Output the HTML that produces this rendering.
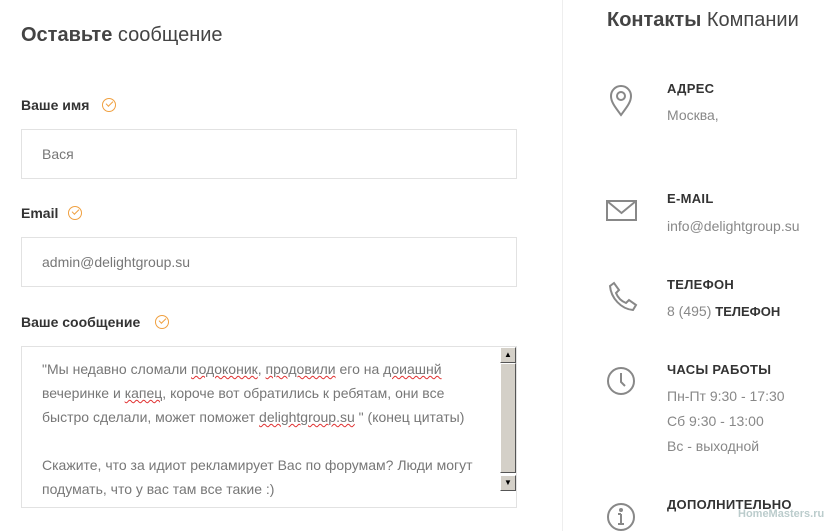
<!DOCTYPE html>
<html><head><meta charset="utf-8"><style>
*{margin:0;padding:0;box-sizing:border-box}
body{width:831px;height:531px;overflow:hidden;background:#fff;font-family:"Liberation Sans","DejaVu Sans",sans-serif;position:relative;color:#444}
.a{position:absolute;white-space:nowrap}
.h{font-size:20px;color:#444}
.h b{font-weight:bold}
.lbl{font-size:14px;font-weight:bold;color:#333}
.chk{position:absolute;width:14px;height:14px;border:1px solid #f0a040;border-radius:50%}
.chk:after{content:"";position:absolute;left:3px;top:2px;width:6px;height:3px;border-left:1.2px solid #f0a040;border-bottom:1.2px solid #f0a040;transform:rotate(-45deg)}
.inp{position:absolute;left:21px;width:496px;height:50px;border:1px solid #e2e2e2;font-size:14px;color:#777;padding:16px 0 0 20px}
.ta{position:absolute;left:21px;top:346px;width:496px;height:162px;border:1px solid #e2e2e2;font-size:14px;color:#777;line-height:24px;padding:10px 0 0 20px}
.sq{text-decoration:underline wavy #e03030;text-decoration-thickness:1px}
.sb{position:absolute;background:#d4d0c8;border:1px solid;border-color:#fff #555 #555 #fff}
.hd{font-size:13px;font-weight:bold;color:#333;letter-spacing:.3px}
.tx{font-size:14px;color:#888}
</style></head><body>
<div class="a h" style="left:21px;top:24px"><b>Оставьте</b> сообщение</div>
<div class="a lbl" style="left:21px;top:97px">Ваше имя</div><div class="chk" style="left:102px;top:98px"></div>
<div class="inp" style="top:129px">Вася</div>
<div class="a lbl" style="left:21px;top:205px">Email</div><div class="chk" style="left:68px;top:206px"></div>
<div class="inp" style="top:237px">admin@delightgroup.su</div>
<div class="a lbl" style="left:21px;top:314px">Ваше сообщение</div><div class="chk" style="left:155px;top:315px"></div>
<div class="ta">"Мы недавно сломали <span class="sq">подоконик</span>, <span class="sq">продовили</span> его на <span class="sq">доиашнй</span><br>вечеринке и <span class="sq">капец</span>, короче вот обратились к ребятам, они все<br>быстро сделали, может поможет <span class="sq">delightgroup.su</span> " (конец цитаты)<br><br>Скажите, что за идиот рекламирует Вас по форумам? Люди могут<br>подумать, что у вас там все такие :)</div>
<div class="sb" style="left:500px;top:347px;width:16px;height:16px;font-size:8px;text-align:center;line-height:14px;color:#000">▲</div>
<div class="sb" style="left:500px;top:363px;width:16px;height:110px"></div>
<div class="sb" style="left:500px;top:475px;width:16px;height:16px;font-size:8px;text-align:center;line-height:14px;color:#000">▼</div>
<div class="a" style="left:562px;top:0;width:1px;height:531px;background:#eee"></div>
<div class="a h" style="left:607px;top:9px"><b>Контакты</b> Компании</div>
<svg class="a" style="left:606px;top:84px" width="30" height="34" viewBox="0 0 30 34" fill="none" stroke="#888" stroke-width="2"><path d="M15 31 C9 23 5 18 5 12 A10 10 0 0 1 25 12 C25 18 21 23 15 31Z"/><circle cx="15" cy="12" r="4"/></svg>
<div class="a hd" style="left:667px;top:81px">АДРЕС</div>
<div class="a tx" style="left:667px;top:107px">Москва,</div>
<svg class="a" style="left:606px;top:200px" width="32" height="22" fill="none" stroke="#888" stroke-width="2"><rect x="1" y="1" width="29" height="19"/><path d="M1 1 L15.5 13 L30 1"/></svg>
<div class="a hd" style="left:667px;top:191px">E-MAIL</div>
<div class="a tx" style="left:667px;top:218px">info@delightgroup.su</div>
<svg class="a" style="left:606px;top:281px" width="32" height="32" fill="none" stroke="#888" stroke-width="2"><path d="M4 5 L8 2 L13 9 L10 12 C12 17 15 20 20 22 L23 19 L30 24 L27 29 C15 28 5 17 4 5Z"/></svg>
<div class="a hd" style="left:667px;top:277px">ТЕЛЕФОН</div>
<div class="a tx" style="left:667px;top:303px">8 (495) <span style="color:#333;font-weight:bold;font-size:13px">ТЕЛЕФОН</span></div>
<svg class="a" style="left:606px;top:366px" width="30" height="30" fill="none" stroke="#888" stroke-width="2"><circle cx="15" cy="15" r="13"/><path d="M15 7 V16 L19 20"/></svg>
<div class="a hd" style="left:667px;top:362px">ЧАСЫ РАБОТЫ</div>
<div class="a tx" style="left:667px;top:388px">Пн-Пт 9:30 - 17:30</div>
<div class="a tx" style="left:667px;top:413px">Сб 9:30 - 13:00</div>
<div class="a tx" style="left:667px;top:438px">Вс - выходной</div>
<svg class="a" style="left:606px;top:502px" width="30" height="29" fill="none" stroke="#888" stroke-width="2"><circle cx="15" cy="15" r="13"/><path d="M15 12 V22 M12 22 H18 M12 12 H15"/><circle cx="15" cy="8" r="1" fill="#888"/></svg>
<div class="a hd" style="left:667px;top:497px">ДОПОЛНИТЕЛЬНО</div>
<div class="a" style="left:738px;top:508px;font-size:11px;color:#bcc;font-weight:bold">HomeMasters.ru</div>
</body></html>
